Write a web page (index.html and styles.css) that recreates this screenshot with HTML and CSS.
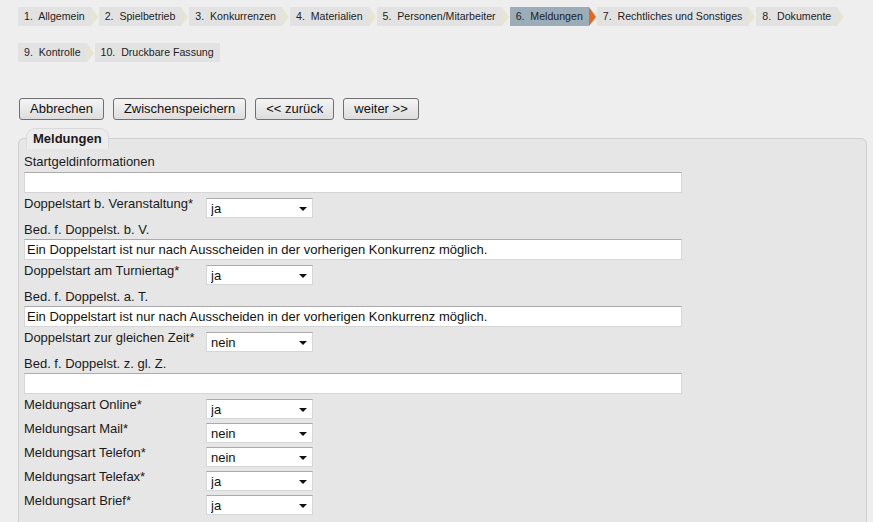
FILE: index.html
```html
<!DOCTYPE html>
<html lang="de">
<head>
<meta charset="utf-8">
<title>Meldungen</title>
<link rel="stylesheet" href="styles.css">
</head>
<body>
<div class="page">
  <ul class="steps">
    <li class="step"><span class="step-label">1.&nbsp; Allgemein</span></li>
    <li class="step"><span class="step-label">2.&nbsp; Spielbetrieb</span></li>
    <li class="step"><span class="step-label">3.&nbsp; Konkurrenzen</span></li>
    <li class="step"><span class="step-label">4.&nbsp; Materialien</span></li>
    <li class="step"><span class="step-label">5.&nbsp; Personen/Mitarbeiter</span></li>
    <li class="step active"><span class="step-label">6.&nbsp; Meldungen</span></li>
    <li class="step"><span class="step-label">7.&nbsp; Rechtliches und Sonstiges</span></li>
    <li class="step"><span class="step-label">8.&nbsp; Dokumente</span></li>
    <li class="step"><span class="step-label">9.&nbsp; Kontrolle</span></li>
    <li class="step last"><span class="step-label">10.&nbsp; Druckbare Fassung</span></li>
  </ul>

  <div class="actions">
    <button class="btn" type="button">Abbrechen</button>
    <button class="btn" type="button">Zwischenspeichern</button>
    <button class="btn" type="button">&lt;&lt; zurück</button>
    <button class="btn" type="button">weiter &gt;&gt;</button>
  </div>

  <fieldset class="panel">
    <legend class="panel-title">Meldungen</legend>

    <div class="field-label first">Startgeldinformationen</div>
    <input class="text-input first-input" type="text" value="">

    <div class="select-row">
      <label class="row-label">Doppelstart b. Veranstaltung*</label>
      <span class="select"><select><option>ja</option><option>nein</option></select></span>
    </div>
    <div class="field-label">Bed. f. Doppelst. b. V.</div>
    <input class="text-input" type="text" value="Ein Doppelstart ist nur nach Ausscheiden in der vorherigen Konkurrenz möglich.">

    <div class="select-row">
      <label class="row-label">Doppelstart am Turniertag*</label>
      <span class="select"><select><option>ja</option><option>nein</option></select></span>
    </div>
    <div class="field-label">Bed. f. Doppelst. a. T.</div>
    <input class="text-input" type="text" value="Ein Doppelstart ist nur nach Ausscheiden in der vorherigen Konkurrenz möglich.">

    <div class="select-row">
      <label class="row-label">Doppelstart zur gleichen Zeit*</label>
      <span class="select"><select><option>nein</option><option>ja</option></select></span>
    </div>
    <div class="field-label">Bed. f. Doppelst. z. gl. Z.</div>
    <input class="text-input" type="text" value="">

    <div class="select-row">
      <label class="row-label">Meldungsart Online*</label>
      <span class="select"><select><option>ja</option><option>nein</option></select></span>
    </div>
    <div class="select-row">
      <label class="row-label">Meldungsart Mail*</label>
      <span class="select"><select><option>nein</option><option>ja</option></select></span>
    </div>
    <div class="select-row">
      <label class="row-label">Meldungsart Telefon*</label>
      <span class="select"><select><option>nein</option><option>ja</option></select></span>
    </div>
    <div class="select-row">
      <label class="row-label">Meldungsart Telefax*</label>
      <span class="select"><select><option>ja</option><option>nein</option></select></span>
    </div>
    <div class="select-row">
      <label class="row-label">Meldungsart Brief*</label>
      <span class="select"><select><option>ja</option><option>nein</option></select></span>
    </div>
  </fieldset>
</div>
</body>
</html>
```

FILE: styles.css
```css
html, body {
  margin: 0;
  padding: 0;
  background: #eeeeee;
}

body {
  font-family: "Liberation Sans", Arial, sans-serif;
  color: #1a1a1a;
  font-size: 13px;
}

.page {
  padding: 7px 0 0 18px;
  width: 849px;
}

/* ---------- step tabs ---------- */
.steps {
  list-style: none;
  margin: 0;
  padding: 0;
  display: flex;
  flex-wrap: wrap;
  row-gap: 17px;
  width: 849px;
}

.step {
  display: flex;
  margin-right: 1px;
}

.step-label {
  display: block;
  height: 19px;
  line-height: 19px;
  padding: 0 6px 0 6px;
  background: #e2e2e2;
  font-size: 10.6px;
  color: #222222;
  white-space: nowrap;
}

.step::after {
  content: "";
  display: block;
  width: 0;
  height: 0;
  border-left: 7px solid #e6e5d2;
  border-top: 10px solid transparent;
  border-bottom: 9px solid transparent;
}

.step.active .step-label {
  background: #9aadb8;
}

.step.active::after {
  border-left-color: #e8661e;
}

.step.last::after {
  border-left-color: transparent;
}

/* ---------- buttons ---------- */
.actions {
  display: flex;
  gap: 9px;
  margin-top: 36px;
  padding-left: 1px;
}

.btn {
  font-family: "Liberation Sans", Arial, sans-serif;
  font-size: 13px;
  color: #111111;
  height: 22px;
  padding: 0 10px;
  border: 1px solid #707070;
  border-radius: 3px;
  background: linear-gradient(#f4f4f4, #dddddd);
  line-height: 20px;
}

/* ---------- fieldset ---------- */
.panel {
  margin: 8px 0 0 0;
  padding: 0 5px 40px 5px;
  width: 849px;
  box-sizing: border-box;
  border: 1px solid #cfcfcf;
  border-radius: 6px 6px 0 0;
  background: #e6e6e6;
}

.panel-title {
  margin-left: 2px;
  padding: 0 6px;
  height: 19px;
  line-height: 19px;
  font-weight: bold;
  font-size: 13px;
  color: #1a1a1a;
  background: #ececec;
  border: 1px solid #d9d9d9;
  border-bottom-color: transparent;
  border-radius: 9px 9px 0 0;
}

.field-label {
  line-height: 15px;
  padding-top: 2px;
}

.field-label.first {
  padding-top: 5px;
}

.text-input {
  display: block;
  box-sizing: border-box;
  width: 658px;
  height: 21px;
  margin: 2px 0 3px 0;
  padding: 0 2px;
  border: 1px solid #d6d6d6;
  border-top-color: #ababab;
  background: #ffffff;
  font-family: "Liberation Sans", Arial, sans-serif;
  font-size: 13px;
  color: #111111;
  outline: none;
}

.text-input.first-input {
  margin-top: 3px;
}

.select-row {
  display: flex;
  align-items: flex-start;
  height: 24px;
}

.row-label {
  width: 182px;
  line-height: 15px;
}

.select {
  position: relative;
  display: block;
  width: 107px;
  height: 20px;
  margin-top: 2px;
}

.select select {
  appearance: none;
  -webkit-appearance: none;
  box-sizing: border-box;
  width: 100%;
  height: 100%;
  margin: 0;
  padding: 0 0 0 4px;
  border: 1px solid #d6d6d6;
  border-top-color: #ababab;
  border-radius: 0;
  background: #ffffff;
  font-family: "Liberation Sans", Arial, sans-serif;
  font-size: 13px;
  color: #111111;
  outline: none;
}

.select::after {
  content: "";
  position: absolute;
  right: 6px;
  top: 9px;
  width: 0;
  height: 0;
  border-top: 4px solid #111111;
  border-left: 4px solid transparent;
  border-right: 4px solid transparent;
  pointer-events: none;
}
```
